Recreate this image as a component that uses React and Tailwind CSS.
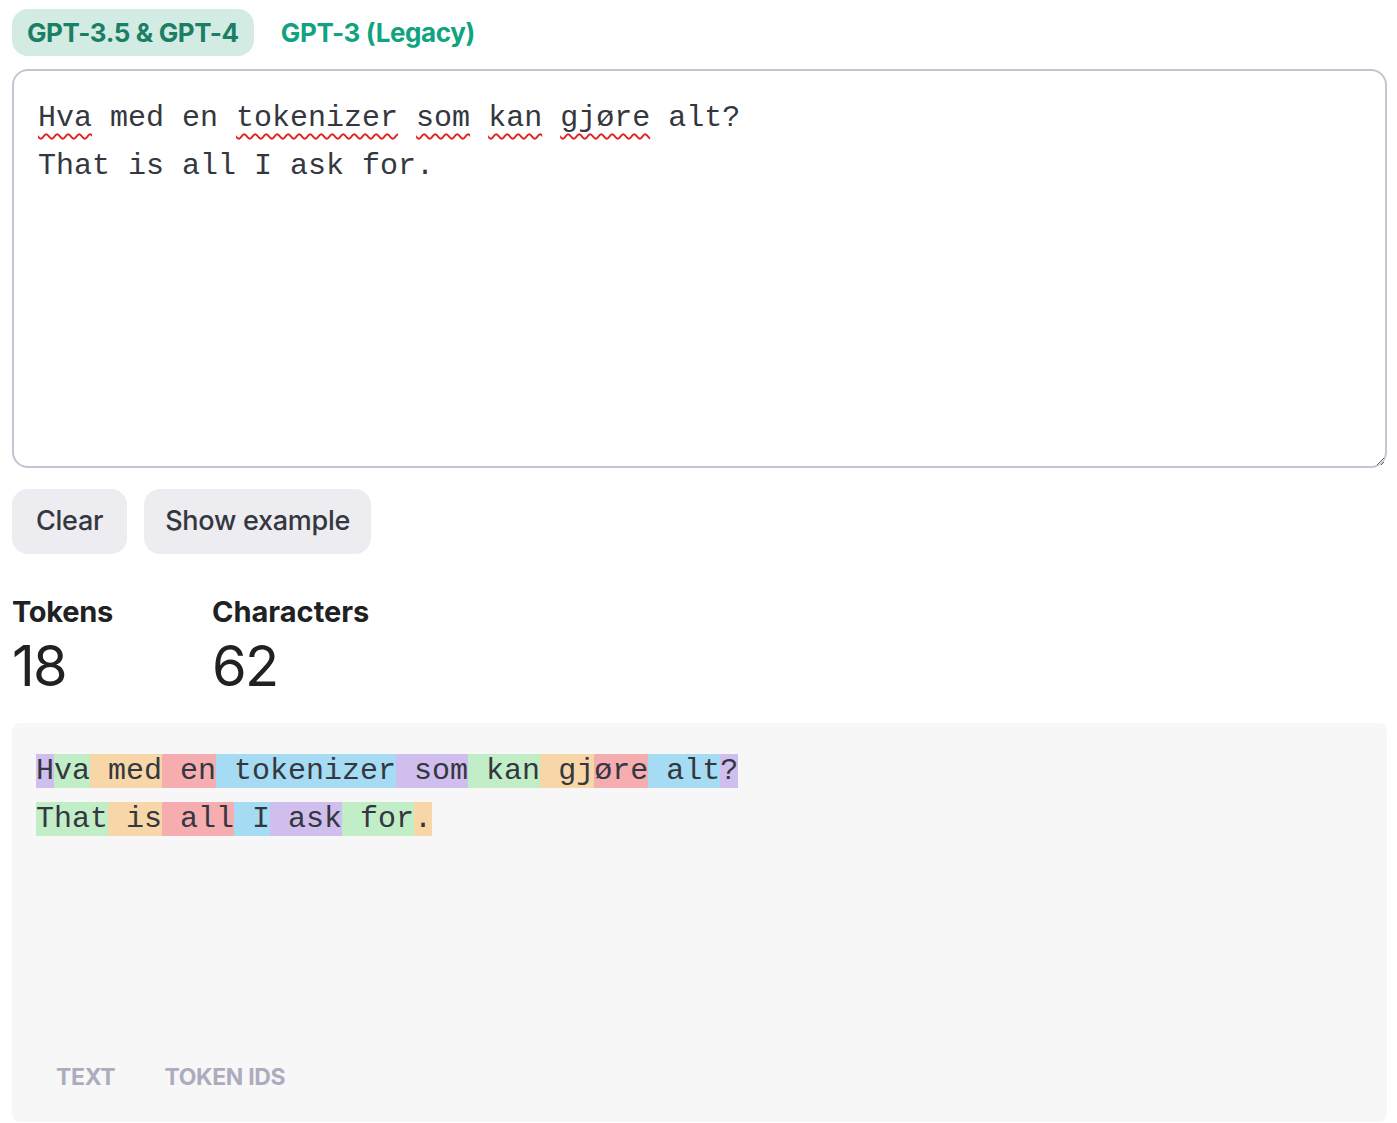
const SANS = { fontFamily: 'Inter, "Noto Sans", sans-serif' }
const MONO = { fontFamily: '"Liberation Mono", "DejaVu Sans Mono", monospace' }

const tokens = [
  [
    ['H', 'bg-[#d0bfee]'],
    ['va', 'bg-[#c1edc7]'],
    [' med', 'bg-[#f7d7a8]'],
    [' en', 'bg-[#f5adb0]'],
    [' tokenizer', 'bg-[#a5dcf3]'],
    [' som', 'bg-[#d0bfee]'],
    [' kan', 'bg-[#c1edc7]'],
    [' gj', 'bg-[#f7d7a8]'],
    ['øre', 'bg-[#f5adb0]'],
    [' alt', 'bg-[#a5dcf3]'],
    ['?', 'bg-[#d0bfee]'],
  ],
  [
    ['That', 'bg-[#c1edc7]'],
    [' is', 'bg-[#f7d7a8]'],
    [' all', 'bg-[#f5adb0]'],
    [' I', 'bg-[#a5dcf3]'],
    [' ask', 'bg-[#d0bfee]'],
    [' for', 'bg-[#c1edc7]'],
    ['.', 'bg-[#f7d7a8]'],
  ],
]

function Typo({ children }) {
  return (
    <span className="underline decoration-wavy decoration-[#e0201c] decoration-[1.5px] underline-offset-[7px]">
      {children}
    </span>
  )
}

export default function App() {
  return (
    <div className="min-h-screen bg-white pl-3 pr-[10px] pt-[9px]" style={SANS}>
      <div className="flex gap-3">
        <button className="h-[47px] rounded-2xl bg-[#d2ece3] px-[15px] text-[26px] font-bold tracking-[-0.015em] text-[#1a7f64]">
          GPT-3.5 &amp; GPT-4
        </button>
        <button className="h-[47px] rounded-2xl px-[15px] text-[26px] font-bold tracking-[-0.015em] text-[#10a37f]">
          GPT-3 (Legacy)
        </button>
      </div>

      <div
        className="mt-[13px] h-[399px] resize-y overflow-auto rounded-2xl border-2 border-[#c5c5d2] px-6 pt-[23px] text-[30px] leading-[48px] whitespace-pre text-[#353740]"
        style={MONO}
      >
        <div>
          <Typo>Hva</Typo> med en <Typo>tokenizer</Typo> <Typo>som</Typo> <Typo>kan</Typo> <Typo>gjøre</Typo> alt?
        </div>
        <div>That is all I ask for.</div>
      </div>

      <div className="mt-[21px] flex gap-[17px]">
        <button className="h-[65px] rounded-2xl bg-[#ececf1] px-6 text-[27px] font-medium tracking-[-0.01em] text-[#353740]">
          Clear
        </button>
        <button className="h-[65px] rounded-2xl bg-[#ececf1] px-[21px] text-[27px] font-medium tracking-[-0.01em] text-[#353740]">
          Show example
        </button>
      </div>

      <div className="mt-[40px] flex">
        <div className="w-[200px]">
          <div className="text-[29px] font-bold leading-[36px] tracking-[-0.01em] text-[#202123]">Tokens</div>
          <div className="text-[56px] leading-[72px] tracking-[-0.03em] text-[#202123]">18</div>
        </div>
        <div>
          <div className="text-[29px] font-bold leading-[36px] text-[#202123]">Characters</div>
          <div className="text-[56px] leading-[72px] tracking-[-0.03em] text-[#202123]">62</div>
        </div>
      </div>

      <div className="mt-[21px] flex h-[399px] flex-col rounded-lg bg-[#f7f7f8] px-6 pt-[24px]">
        <div className="text-[30px] leading-[48px] whitespace-pre text-[#353740]" style={MONO}>
          {tokens.map((line, i) => (
            <div key={i}>
              {line.map(([t, c], j) => (
                <span key={j} className={c}>
                  {t}
                </span>
              ))}
            </div>
          ))}
        </div>
        <div className="mt-auto mb-[28px] flex gap-[49px] pl-5">
          <button className="text-[23px] font-bold uppercase tracking-[-0.015em] text-[#acacbe]">Text</button>
          <button className="text-[23px] font-bold uppercase tracking-[-0.015em] text-[#acacbe]">Token IDs</button>
        </div>
      </div>
    </div>
  )
}
